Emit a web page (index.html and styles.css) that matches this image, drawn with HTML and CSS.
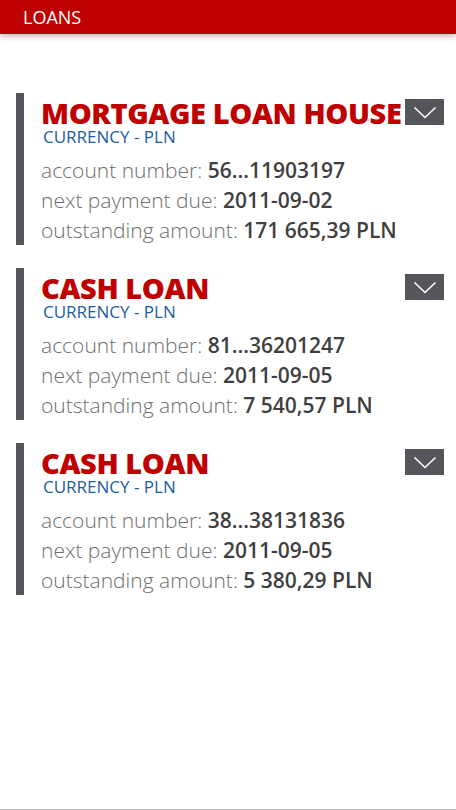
FILE: index.html
```html
<!DOCTYPE html>
<html lang="en">

<head>
    <meta charset="UTF-8">
    <meta name="viewport" content="width=device-width, initial-scale=1.0">
    <title>Loans</title>
    <link rel="stylesheet" href="styles.css">
</head>

<body>

    <div id="header">LOANS</div>

    <div id="loans">
        <div class="loan">
            <div class="loan-head">
                <div class="loan-title">MORTGAGE LOAN HOUSE</div>
                <button class="toggle"><svg width="24" height="13" viewBox="0 0 24 13"><path d="M1.5 1.5 L12 11.5 L22.5 1.5" fill="none" stroke="#fff" stroke-width="1.6"/></svg></button>
            </div>
            <div class="currency">CURRENCY - PLN</div>
            <div class="row">account number: <b>56...11903197</b></div>
            <div class="row">next payment due: <b>2011-09-02</b></div>
            <div class="row">outstanding amount: <b>171 665,39 PLN</b></div>
        </div>

        <div class="loan">
            <div class="loan-head">
                <div class="loan-title">CASH LOAN</div>
                <button class="toggle"><svg width="24" height="13" viewBox="0 0 24 13"><path d="M1.5 1.5 L12 11.5 L22.5 1.5" fill="none" stroke="#fff" stroke-width="1.6"/></svg></button>
            </div>
            <div class="currency">CURRENCY - PLN</div>
            <div class="row">account number: <b>81...36201247</b></div>
            <div class="row">next payment due: <b>2011-09-05</b></div>
            <div class="row">outstanding amount: <b>7 540,57 PLN</b></div>
        </div>

        <div class="loan">
            <div class="loan-head">
                <div class="loan-title">CASH LOAN</div>
                <button class="toggle"><svg width="24" height="13" viewBox="0 0 24 13"><path d="M1.5 1.5 L12 11.5 L22.5 1.5" fill="none" stroke="#fff" stroke-width="1.6"/></svg></button>
            </div>
            <div class="currency">CURRENCY - PLN</div>
            <div class="row">account number: <b>38...38131836</b></div>
            <div class="row">next payment due: <b>2011-09-05</b></div>
            <div class="row">outstanding amount: <b>5 380,29 PLN</b></div>
        </div>
    </div>

</body>

</html>
```

FILE: styles.css
```css
body {
    font-family: 'Open Sans', sans-serif;
    margin: 0;
    padding: 0;
    background-color: #fff;
    height: 810px;
    box-sizing: border-box;
    border-bottom: 1px solid #b4b4b4;
}

#header {
    background-color: #bd0000;
    color: #fff;
    height: 34px;
    line-height: 34px;
    padding-left: 23px;
    font-size: 18px;
    box-shadow: 0 2px 6px rgba(0, 0, 0, 0.3);
}

#loans {
    padding: 59px 12px 0 16px;
    display: flex;
    flex-direction: column;
    gap: 23px;
}

.loan {
    border-left: 8px solid #55565b;
    padding: 7px 0 0 17px;
}

.loan-head {
    display: flex;
    align-items: flex-start;
}

.loan-title {
    flex: 1;
    color: #c00000;
    font-size: 29px;
    font-weight: 800;
    line-height: 26px;
    letter-spacing: -0.4px;
    white-space: nowrap;
}

.toggle {
    flex-shrink: 0;
    width: 39px;
    height: 26px;
    margin-top: -1px;
    border: none;
    padding: 0;
    background-color: #55565b;
    display: flex;
    align-items: center;
    justify-content: center;
}

.currency {
    color: #1d5d9f;
    font-size: 17px;
    line-height: 18px;
    margin: 2px 0 9px 2px;
}

.row {
    color: #6e6e6e;
    font-size: 21px;
    font-weight: 300;
    line-height: 30px;
}

.row b {
    color: #3f3f3f;
    font-weight: 600;
}
```
